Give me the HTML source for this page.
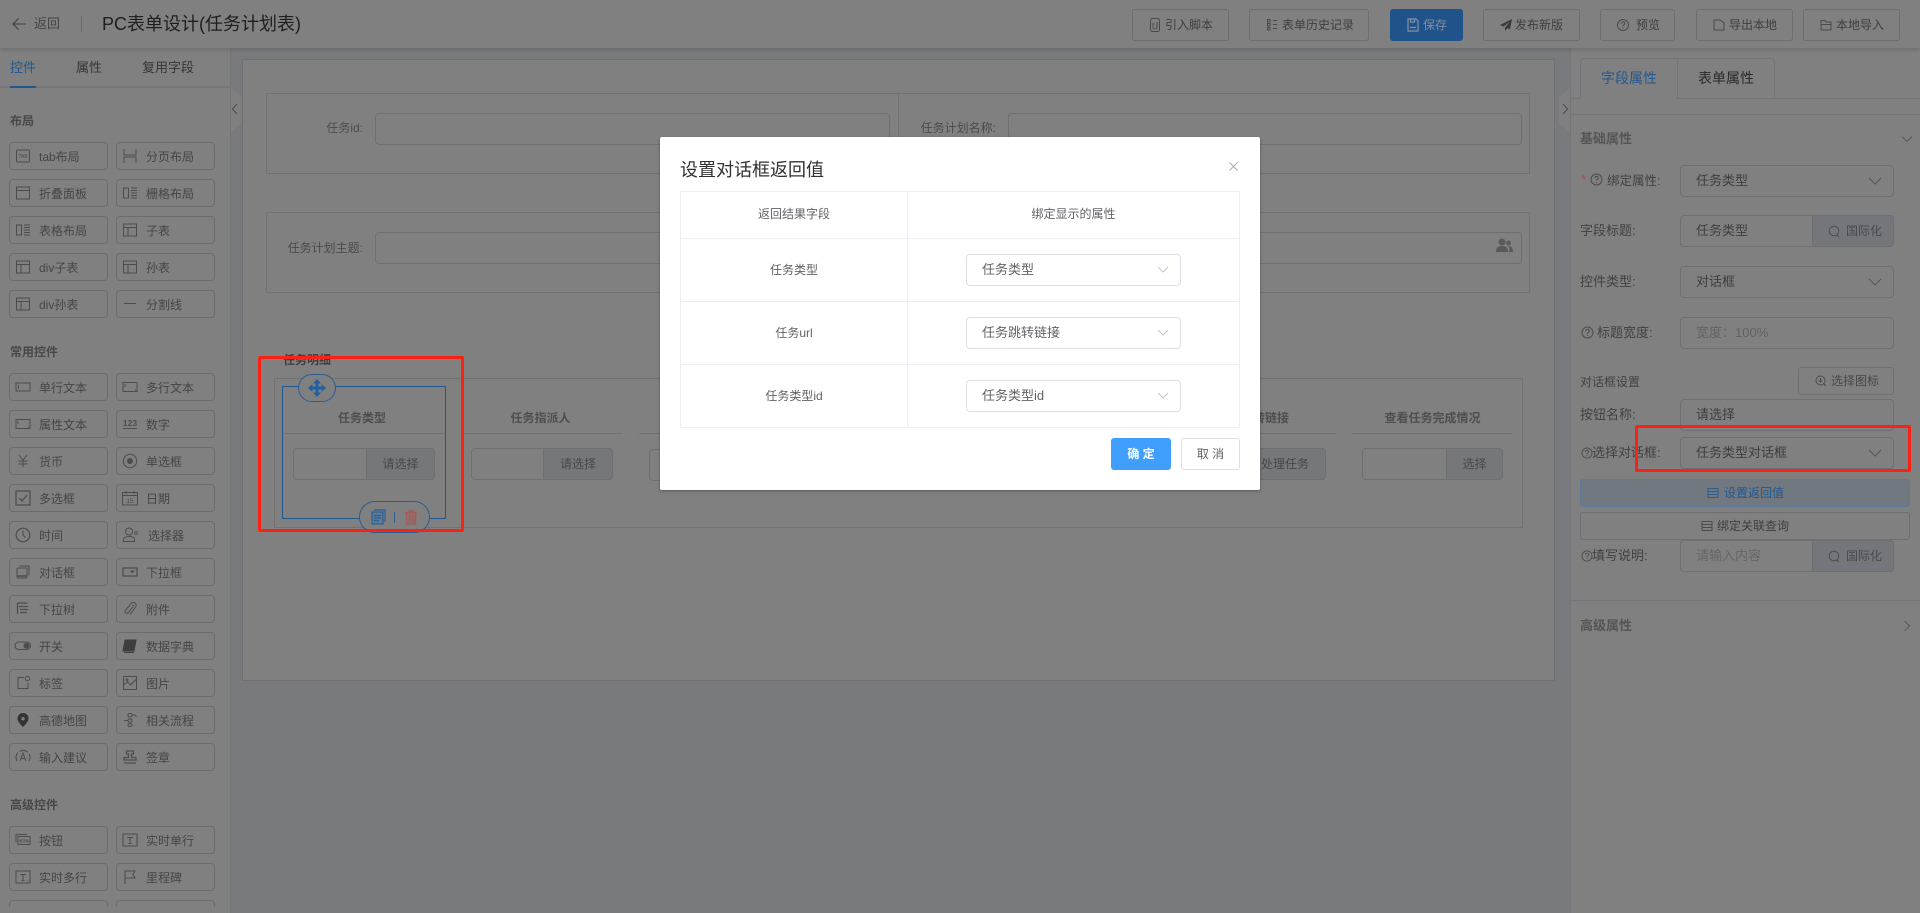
<!DOCTYPE html>
<html lang="zh"><head><meta charset="utf-8"><title>PC表单设计</title>
<style>
html,body{margin:0;padding:0;width:1920px;height:913px;overflow:hidden;background:#797a7d;font-family:"Liberation Sans","Noto Sans CJK SC",sans-serif;font-size:13px;color:#3a3a3a}
div,span,svg{box-sizing:border-box}
.p{position:absolute}
.t{position:absolute;white-space:nowrap;line-height:20px;height:20px}
.hb{position:absolute;top:9px;height:32px;border:1px solid #6e6e6e;border-radius:3px;line-height:30px;font-size:12px;color:#3e3e3e;white-space:nowrap}
.hb svg{position:absolute;top:7px}
.hb span{position:absolute;top:0}
.w{position:absolute;width:99px;height:28px;border:1px solid #6c6c6e;border-radius:4px;font-size:12px;line-height:26px;color:#454545;white-space:nowrap;background:#808080}
.w span{position:absolute;left:29px;top:1px}
.w svg{position:absolute;left:4px;top:4px;width:18px;height:18px;fill:none;stroke:#4c4c4c;stroke-width:1}
.r{left:116px}.r span{left:29px}
.l{left:9px}
.h{position:absolute;left:10px;font-size:12px;font-weight:bold;color:#484848;line-height:20px}
.box{position:absolute;border:1px solid #727272}
.in{position:absolute;border:1px solid #6f6f71;border-radius:4px;height:32px}
.rl{position:absolute;font-size:13px;color:#414141;line-height:20px;white-space:nowrap;left:1580px}
.ri{position:absolute;left:1680px;width:214px;height:32px;border:1px solid #6e6f72;border-radius:4px;font-size:13px;line-height:30px;padding-left:15px;color:#3e3e3e;white-space:nowrap}
.app{position:absolute;right:-1px;top:-1px;width:82px;height:32px;background:#74767b;border:1px solid #6e6f72;border-radius:0 4px 4px 0;font-size:12px;color:#484a4e;line-height:30px;padding-left:33px}
.app svg{position:absolute;left:15px;top:8px}
.chev{position:absolute;right:11px;top:11px}
.ms{position:absolute;left:966px;width:215px;height:32px;border:1px solid #dcdfe6;border-radius:4px;font-size:13px;line-height:30px;padding-left:15px;color:#606266;background:#fff}
.mc{position:absolute;font-size:12px;color:#606266;line-height:20px;text-align:center;white-space:nowrap}
.ml{position:absolute;background:#ebeef5}
.col{position:absolute;top:408px;font-size:12px;font-weight:bold;color:#4e4e4e;text-align:center;line-height:20px;white-space:nowrap}
.cl{position:absolute;top:433px;height:1px;background:#727272}
.gi{position:absolute;top:448px;height:32px;border:1px solid #6f6f71;border-radius:4px}
.ga{position:absolute;top:-1px;right:-1px;height:32px;background:#76777b;border:1px solid #6f6f71;border-radius:0 4px 4px 0;font-size:12px;color:#474747;line-height:30px;text-align:center;white-space:nowrap}
</style></head><body>

<!-- header -->
<div class="p" style="left:0;top:0;width:1920px;height:48px;background:#808080;box-shadow:0 2px 4px rgba(0,0,0,.14);z-index:3">
<svg class="p" style="left:11px;top:16px" width="16" height="16" viewBox="0 0 16 16" fill="none" stroke="#3e3e3e" stroke-width="1.1"><path d="M2 8H15M7.500 2.500L2 8l5.500 5.500"/></svg>
<div class="t" style="left:34px;top:14px;font-size:13px;color:#454545">返回</div>
<div class="p" style="left:81px;top:16px;width:1px;height:16px;background:#6b6b6b"></div>
<div class="t" style="left:102px;top:14px;font-size:18px;color:#1e1e1e">PC表单设计(任务计划表)</div>

<div class="hb" style="left:1132px;width:97px"><svg style="left:15px" width="14" height="16" viewBox="0 0 14 16" fill="none" stroke="#4a4a4a"><rect x="2.500" y="1.500" width="9" height="13" rx="2"/><path d="M5 6v4a2 2 0 0 0 4 0V5"/></svg><span style="left:32px">引入脚本</span></div>
<div class="hb" style="left:1249px;width:120px"><svg style="left:15px" width="14" height="16" viewBox="0 0 14 16" fill="none" stroke="#4a4a4a"><path d="M2.500 2.500h2.500v2.500H2.500zM2.500 6.500h2.500v2.500H2.500zM2.500 10.500h2.500v2.500H2.500zM8 3.500h4M8 7.500h4M8 11.500h4"/></svg><span style="left:32px">表单历史记录</span></div>
<div class="hb" style="left:1390px;width:73px;background:#20538a;border-color:#20538a;color:#80909f"><svg style="left:15px" width="14" height="16" viewBox="0 0 14 16" fill="none" stroke="#8292a5" stroke-width="1.200"><path d="M2 2h8l2 2v10H2zM4.500 2v3h4V2M4 10.500h6"/></svg><span style="left:32px">保存</span></div>
<div class="hb" style="left:1483px;width:97px"><svg style="left:15px" width="14" height="16" viewBox="0 0 14 16" fill="#3a3a3a"><path d="M13 2L1 8l3.500 1.500L11 4.500 6 10.500V14l2.500-2.800 2.500 1z"/></svg><span style="left:31px">发布新版</span></div>
<div class="hb" style="left:1600px;width:75px"><svg style="left:15px" width="14" height="16" viewBox="0 0 14 16" fill="none" stroke="#4a4a4a"><circle cx="7" cy="8" r="5.500"/><path d="M5.300 6.500a1.700 1.700 0 1 1 2.500 1.500c-.6.400-.8.600-.8 1.400M7 10.500v1"/></svg><span style="left:35px">预览</span></div>
<div class="hb" style="left:1696px;width:97px"><svg style="left:15px" width="14" height="16" viewBox="0 0 14 16" fill="none" stroke="#4a4a4a"><path d="M2 3h6l4 3v7H2z"/></svg><span style="left:32px">导出本地</span></div>
<div class="hb" style="left:1803px;width:97px"><svg style="left:15px" width="14" height="16" viewBox="0 0 14 16" fill="none" stroke="#4a4a4a"><path d="M2 3.500h4l1 1.500h5v8H2zM2 7.500h10"/></svg><span style="left:32px">本地导入</span></div>
</div>

<!-- left panel -->
<div class="p" style="left:0;top:0;width:231px;height:913px;background:#808080;border-right:1px solid #757578;overflow:hidden">
<div class="t" style="left:10px;top:58px;color:#23568f">控件</div>
<div class="t" style="left:76px;top:58px;color:#353535">属性</div>
<div class="t" style="left:142px;top:58px;color:#353535">复用字段</div>
<div class="p" style="left:0;top:86px;width:230px;height:2px;background:#76777c"></div>
<div class="p" style="left:10px;top:86px;width:26px;height:2px;background:#23568f"></div>

<div class="h" style="top:111px">布局</div>
<div class="w l" style="top:142px"><svg viewBox="0 0 18 18"><rect x="2.500" y="3" width="13" height="12" rx="1.500"/><text x="9" y="11" font-size="5" text-anchor="middle" fill="#4c4c4c" stroke="none">TAB</text></svg><span>tab布局</span></div>
<div class="w r" style="top:142px"><svg viewBox="0 0 18 18"><path d="M3 2v6h12V2M3 16v-6h12v6"/></svg><span>分页布局</span></div>
<div class="w l" style="top:179px"><svg viewBox="0 0 18 18"><rect x="2.500" y="3" width="13" height="12"/><path d="M2.500 6.500h13"/></svg><span>折叠面板</span></div>
<div class="w r" style="top:179px"><svg viewBox="0 0 18 18"><path d="M2.500 4h5v10h-5zM10 4h6M10 6.500h6M10 9h6M10 11.500h6M10 14h6"/></svg><span>栅格布局</span></div>
<div class="w l" style="top:216px"><svg viewBox="0 0 18 18"><path d="M2.500 4h5v10h-5zM10 4h6M10 6.500h6M10 9h6M10 11.500h6M10 14h6"/></svg><span>表格布局</span></div>
<div class="w r" style="top:216px"><svg viewBox="0 0 18 18"><rect x="2.500" y="3" width="13" height="12"/><path d="M2.500 6.500h13M7 6.500V15"/></svg><span>子表</span></div>
<div class="w l" style="top:253px"><svg viewBox="0 0 18 18"><rect x="2.500" y="3" width="13" height="12"/><path d="M2.500 6.500h13M7 6.500V15"/></svg><span>div子表</span></div>
<div class="w r" style="top:253px"><svg viewBox="0 0 18 18"><rect x="2.500" y="3" width="13" height="12"/><path d="M2.500 6.500h13M7 6.500V15"/></svg><span>孙表</span></div>
<div class="w l" style="top:290px"><svg viewBox="0 0 18 18"><rect x="2.500" y="3" width="13" height="12"/><path d="M2.500 6.500h13M7 6.500V15"/></svg><span>div孙表</span></div>
<div class="w r" style="top:290px"><svg viewBox="0 0 18 18"><path d="M3 8.500h12"/></svg><span>分割线</span></div>

<div class="h" style="top:342px">常用控件</div>
<div class="w l" style="top:373px"><svg viewBox="0 0 18 18"><rect x="2" y="5" width="14" height="8"/><path d="M4.500 7v4"/></svg><span>单行文本</span></div>
<div class="w r" style="top:373px"><svg viewBox="0 0 18 18"><rect x="2" y="4.500" width="14" height="9"/><path d="M14 12h1M4 6v3"/></svg><span>多行文本</span></div>
<div class="w l" style="top:410px"><svg viewBox="0 0 18 18"><rect x="2" y="4.500" width="14" height="9"/><path d="M14 12h1M4 6v3"/></svg><span>属性文本</span></div>
<div class="w r" style="top:410px"><svg viewBox="0 0 18 18"><text x="9" y="11" font-size="8.500" font-weight="bold" text-anchor="middle" fill="#4c4c4c" stroke="none">123</text><path d="M2 13.500h14"/></svg><span>数字</span></div>
<div class="w l" style="top:447px"><svg viewBox="0 0 18 18"><path d="M5 3l4 5 4-5M4.500 9h9M4.500 12h9M9 8v7"/></svg><span>货币</span></div>
<div class="w r" style="top:447px"><svg viewBox="0 0 18 18"><circle cx="9" cy="9" r="6.700"/><circle cx="9" cy="9" r="2.500" fill="#4c4c4c"/></svg><span>单选框</span></div>
<div class="w l" style="top:484px"><svg viewBox="0 0 18 18"><rect x="2" y="2" width="14" height="14" stroke-width="1.200"/><path d="M5.500 9l2.500 3 5-6" stroke-width="1.300"/></svg><span>多选框</span></div>
<div class="w r" style="top:484px"><svg viewBox="0 0 18 18"><rect x="1.500" y="3.500" width="15" height="12.500"/><path d="M1.500 6.500h15M5 2v3M13 2v3"/><text x="9" y="14" font-size="6.500" text-anchor="middle" fill="#4c4c4c" stroke="none">15</text></svg><span>日期</span></div>
<div class="w l" style="top:521px"><svg viewBox="0 0 18 18"><circle cx="9" cy="9" r="6.800" stroke-width="1.200"/><path d="M9 4.500V9l2.500 2.500"/></svg><span>时间</span></div>
<div class="w r" style="top:521px"><svg viewBox="0 0 18 18"><circle cx="8" cy="5.500" r="3.500"/><path d="M2 15.500c0-3.500 2-5 6-5s5 1 5.500 2V15.500zM13 6h4M13 8h4"/></svg><span style="left:31px">选择器</span></div>
<div class="w l" style="top:558px"><svg viewBox="0 0 18 18"><rect x="3" y="5" width="10" height="10" rx="1"/><path d="M5.500 3H15v9.500"/><path d="M3 13h10" stroke-width="1.500"/></svg><span>对话框</span></div>
<div class="w r" style="top:558px"><svg viewBox="0 0 18 18"><rect x="2" y="5" width="14" height="8" stroke-width="1.200"/><path d="M10 8h3l-1.500 1.500z" fill="#4c4c4c"/></svg><span>下拉框</span></div>
<div class="w l" style="top:595px"><svg viewBox="0 0 18 18"><path d="M3.500 3h10M3.500 3v11M5 6.500h9M6 9.500h8M6 12.500h7" stroke-width="1.200"/></svg><span>下拉树</span></div>
<div class="w r" style="top:595px"><svg viewBox="0 0 18 18"><path d="M13 5l-6 8a2 2 0 0 1-3-2l6.500-8a3 3 0 0 1 4.500 3.500l-6 8"/></svg><span>附件</span></div>
<div class="w l" style="top:632px"><svg viewBox="0 0 18 18"><rect x="1" y="5" width="15.500" height="7.500" rx="3.750"/><circle cx="12.500" cy="8.750" r="2.500" fill="#4c4c4c"/></svg><span>开关</span></div>
<div class="w r" style="top:632px"><svg viewBox="0 0 18 18" style="stroke:#3e3e3e"><path d="M4 3h11l-2 11H2z" fill="#3e3e3e"/><path d="M3 15.500h10"/></svg><span>数据字典</span></div>
<div class="w l" style="top:669px"><svg viewBox="0 0 18 18"><path d="M10 3.500H4v11h10V9"/><circle cx="13.500" cy="4.500" r="2.200"/></svg><span>标签</span></div>
<div class="w r" style="top:669px"><svg viewBox="0 0 18 18"><rect x="2.500" y="2.500" width="13" height="13"/><path d="M2.500 11l4-3 3 3 6-6"/><circle cx="6" cy="6" r="1"/></svg><span>图片</span></div>
<div class="w l" style="top:706px"><svg viewBox="0 0 18 18"><path d="M9 2a5.500 5.500 0 0 0-5.500 5.500C3.500 11 9 16 9 16s5.500-5 5.500-8.500A5.500 5.500 0 0 0 9 2zm0 4a1.700 1.700 0 1 1 0 3.400A1.700 1.700 0 0 1 9 6z" fill="#333" stroke="none"/></svg><span>高德地图</span></div>
<div class="w r" style="top:706px"><svg viewBox="0 0 18 18"><rect x="7" y="2.500" width="4" height="3.500" rx="1.500"/><rect x="7" y="8" width="4" height="3" rx="1.500"/><rect x="7" y="12.500" width="4" height="3" rx="1.500"/><path d="M7 9.500H3M11 4h3l1.500 2"/></svg><span>相关流程</span></div>
<div class="w l" style="top:743px"><svg viewBox="0 0 18 18"><path d="M3 13a7 7 0 1 1 12 0" stroke-dasharray="9 2"/><path d="M6 13l3-8 3 8M7 10.500h4"/></svg><span>输入建议</span></div>
<div class="w r" style="top:743px"><svg viewBox="0 0 18 18" stroke-width="1.200"><path d="M5.500 3h7v3H10.500v3.500H15V12H3V9.500h4.500V6H5.500zM3 15h12" stroke-width="1.200"/></svg><span>签章</span></div>

<div class="h" style="top:795px">高级控件</div>
<div class="w l" style="top:826px"><svg viewBox="0 0 18 18"><rect x="4" y="5.500" width="12" height="8"/><path d="M2 11.500V3.500h11"/><text x="10" y="11.500" font-size="4.500" font-weight="bold" text-anchor="middle" fill="#4c4c4c" stroke="none">BTN</text></svg><span>按钮</span></div>
<div class="w r" style="top:826px"><svg viewBox="0 0 18 18"><rect x="2" y="3" width="14" height="12"/><path d="M6 6.500h6M9 6.500v6M7.500 12.500h3"/></svg><span>实时单行</span></div>
<div class="w l" style="top:863px"><svg viewBox="0 0 18 18"><rect x="2" y="3" width="14" height="12"/><path d="M6 6.500h6M9 6.500v6M7.500 12.500h3M13.500 13h1" /></svg><span>实时多行</span></div>
<div class="w r" style="top:863px"><svg viewBox="0 0 18 18"><path d="M4 16V3h10l-2 3.500 2 3.500H4"/></svg><span>里程碑</span></div>
<div class="p" style="left:0;top:907px;width:230px;height:6px;background:#808080;z-index:2"></div>
<div class="w l" style="top:900px"></div>
<div class="w r" style="top:900px"></div>
</div>
<div class="p" style="left:231px;top:88px;width:10px;height:44px;background:#808080;clip-path:polygon(0 0,100% 20%,100% 80%,0 100%)"></div>
<svg class="p" style="left:231px;top:103px" width="8" height="12" viewBox="0 0 8 12" fill="none" stroke="#4c4c4c"><path d="M6 1L1.500 6 6 11"/></svg>

<!-- canvas -->
<div class="p" style="left:242px;top:59px;width:1313px;height:622px;background:#808080;border:1px solid #707072"></div>
<div class="box" style="left:266px;top:93px;width:1264px;height:81px"></div>
<div class="p" style="left:898px;top:93px;width:1px;height:81px;background:#727272"></div>
<div class="in" style="left:375px;top:113px;width:515px"></div>
<div class="t" style="left:300px;width:63px;top:118px;text-align:right;color:#4b4b4b;font-size:12px">任务id:</div>
<div class="t" style="left:900px;top:118px;color:#4b4b4b;font-size:12px;width:96px;text-align:right">任务计划名称:</div>
<div class="in" style="left:1008px;top:113px;width:514px"></div>
<div class="box" style="left:266px;top:212px;width:1264px;height:81px"></div>
<div class="in" style="left:375px;top:232px;width:1147px"></div>
<div class="t" style="left:260px;width:103px;top:238px;text-align:right;color:#4b4b4b;font-size:12px">任务计划主题:</div>
<svg class="p" style="left:1496px;top:238px" width="17" height="14" viewBox="0 0 17 14" fill="#5a5a5a"><circle cx="6" cy="4" r="3.500"/><path d="M0 14c0-5 2.500-6 6-6s6 1 6 6z"/><circle cx="12.500" cy="5" r="2.500"/><path d="M13 14h4c0-4-1.500-6-4.500-6 1 1.500 1 3.500.5 6z"/></svg>

<div class="t" style="left:283px;top:350px;font-size:12px;font-weight:bold;color:#3f3f3f">任务明细</div>
<div class="box" style="left:274px;top:378px;width:1249px;height:150px"></div>
<div class="col" style="left:280px;width:164px">任务类型</div>
<div class="cl" style="left:283px;width:163px"></div>
<div class="gi" style="left:293px;width:142px"><div class="ga" style="width:69px">请选择</div></div>
<div class="col" style="left:461px;width:159px">任务指派人</div>
<div class="cl" style="left:463px;width:159px"></div>
<div class="gi" style="left:471px;width:142px"><div class="ga" style="width:70px">请选择</div></div>
<div class="cl" style="left:639px;width:50px"></div>
<div class="gi" style="left:649px;width:100px;top:449px"></div>
<div class="col" style="left:1200px;width:89px;text-align:right">跳转链接</div>
<div class="cl" style="left:1200px;width:136px"></div>
<div class="gi" style="left:1200px;width:126px"><div class="ga" style="width:100px;text-align:right;padding-right:16px">处理任务</div></div>
<div class="col" style="left:1352px;width:161px">查看任务完成情况</div>
<div class="cl" style="left:1352px;width:161px"></div>
<div class="gi" style="left:1362px;width:141px"><div class="ga" style="width:57px">选择</div></div>

<!-- selected column -->
<div class="p" style="left:282px;top:386px;width:164px;height:133px;border:1px solid #23588f"></div>
<div class="p" style="left:298px;top:374px;width:38px;height:28px;border:1px solid #2a5d92;border-radius:14px;background:#808080"></div>
<svg class="p" style="left:308px;top:379px" width="18" height="18" viewBox="0 0 18 18" fill="#23609f"><path d="M9 0L13 4.500H10.500V7.500H13.500V5L18 9 13.500 13V10.500H10.500V13.500H13L9 18 5 13.500H7.500V10.500H4.500V13L0 9 4.500 5V7.500H7.500V4.500H5z"/></svg>
<div class="p" style="left:359px;top:501px;width:71px;height:32px;border:1px solid #2a5d92;border-radius:16px;background:#808080"></div>
<svg class="p" style="left:371px;top:509px" width="15" height="16" viewBox="0 0 15 16" fill="none" stroke="#23609f" stroke-width="1.200"><rect x="1" y="3" width="11" height="12" fill="#23609f" fill-opacity=".25"/><path d="M3 1h11v12M3 6.500h7M3 9h7M3 11.500h5"/></svg>
<div class="p" style="left:394px;top:512px;width:1px;height:11px;background:#2a5d92"></div>
<svg class="p" style="left:404px;top:509px" width="14" height="16" viewBox="0 0 14 16" fill="#a35c5c" fill-opacity=".45" stroke="#a35c5c" stroke-width="1.500"><path d="M1 3.500h12M5 3.500V1.500h4v2M2.500 3.500V15h9V3.500z"/><path d="M5.500 6v6.500M8.500 6v6.500"/></svg>

<!-- right panel -->
<div class="p" style="left:1570px;top:48px;width:350px;height:865px;background:#808080;border-left:1px solid #757578"></div>
<div class="p" style="left:1559px;top:88px;width:11px;height:44px;background:#808080;clip-path:polygon(0 20%,100% 0,100% 100%,0 80%)"></div>
<svg class="p" style="left:1561px;top:103px" width="8" height="12" viewBox="0 0 8 12" fill="none" stroke="#4c4c4c"><path d="M2 1l4.500 5L2 11"/></svg>
<div class="p" style="left:1570px;top:98px;width:350px;height:1px;background:#737478"></div>
<div class="p" style="left:1580px;top:58px;width:195px;height:41px;border:1px solid #737478;border-bottom:none;border-radius:4px 4px 0 0"></div>
<div class="p" style="left:1581px;top:98px;width:96px;height:1px;background:#808080"></div>
<div class="p" style="left:1677px;top:58px;width:1px;height:41px;background:#737478"></div>
<div class="t" style="left:1601px;top:68px;font-size:14px;color:#24588f">字段属性</div>
<div class="t" style="left:1698px;top:68px;font-size:14px;color:#2a2a2a">表单属性</div>
<div class="p" style="left:1570px;top:114px;width:350px;height:1px;background:#747579"></div>
<div class="t" style="left:1580px;top:129px;font-size:13px;font-weight:bold;color:#555">基础属性</div>
<svg class="p" style="left:1901px;top:135px" width="12" height="8" viewBox="0 0 12 8" fill="none" stroke="#5a5a5a"><path d="M1 1.500L6 6.500 11 1.500"/></svg>

<div class="p" style="left:1581px;top:172px;color:#a05050;font-size:13px;line-height:16px">*</div>
<svg class="p" style="left:1590px;top:173px" width="13" height="13" viewBox="0 0 13 13" fill="none" stroke="#4c4c4c"><circle cx="6.500" cy="6.500" r="5.500"/><path d="M4.800 5a1.700 1.700 0 1 1 2.500 1.500c-.6.400-.8.600-.8 1.400M6.500 9v1"/></svg>
<div class="rl" style="left:1607px;top:171px;font-size:12.500px">绑定属性:</div>
<div class="ri" style="top:165px">任务类型<svg class="chev" width="14" height="9" viewBox="0 0 14 9" fill="none" stroke="#55575b"><path d="M1 1l6 6 6-6"/></svg></div>
<div class="rl" style="top:221px">字段标题:</div>
<div class="ri" style="top:215px">任务类型<div class="app"><svg width="13" height="14" viewBox="0 0 13 14" fill="none" stroke="#4c4e52"><circle cx="6" cy="7" r="4.800"/><path d="M9 11l2 2"/></svg>国际化</div></div>
<div class="rl" style="top:272px">控件类型:</div>
<div class="ri" style="top:266px">对话框<svg class="chev" width="14" height="9" viewBox="0 0 14 9" fill="none" stroke="#55575b"><path d="M1 1l6 6 6-6"/></svg></div>
<svg class="p" style="left:1581px;top:326px" width="13" height="13" viewBox="0 0 13 13" fill="none" stroke="#4c4c4c"><circle cx="6.500" cy="6.500" r="5.500"/><path d="M4.800 5a1.700 1.700 0 1 1 2.500 1.500c-.6.400-.8.600-.8 1.400M6.500 9v1"/></svg>
<div class="rl" style="left:1597px;top:323px">标题宽度:</div>
<div class="ri" style="top:317px;color:#626262">宽度：100%</div>

<div class="rl" style="top:372px;font-size:12px">对话框设置</div>
<div class="p" style="left:1798px;top:367px;width:96px;height:28px;border:1px solid #6e6f72;border-radius:3px;font-size:12px;line-height:26px;padding-left:32px;color:#474747;white-space:nowrap">选择图标<svg class="p" style="left:16px;top:7px" width="12" height="12" viewBox="0 0 12 12" fill="none" stroke="#4c4c4c"><circle cx="5.500" cy="5.500" r="4.500"/><path d="M9 9l2 2M5.500 3v4M4 5.500l1.500 1.500L7 5.500"/></svg></div>
<div class="rl" style="top:405px">按钮名称:</div>
<div class="ri" style="top:399px">请选择</div>
<svg class="p" style="left:1581px;top:447px" width="12" height="12" viewBox="0 0 13 13" fill="none" stroke="#4c4c4c"><circle cx="6.500" cy="6.500" r="5.500"/><path d="M4.800 5a1.700 1.700 0 1 1 2.500 1.500c-.6.400-.8.600-.8 1.400M6.500 9v1"/></svg>
<div class="rl" style="left:1592px;top:443px">选择对话框:</div>
<div class="ri" style="top:437px">任务类型对话框<svg class="chev" width="14" height="9" viewBox="0 0 14 9" fill="none" stroke="#55575b"><path d="M1 1l6 6 6-6"/></svg></div>
<div class="p" style="left:1580px;top:479px;width:330px;height:28px;background:#717880;border:1px solid #5c7b9c;border-radius:3px"></div>
<svg class="p" style="left:1707px;top:487px" width="12" height="12" viewBox="0 0 12 12" fill="none" stroke="#2d5c8d"><path d="M1 1.500h10v9H1zM1 4.500h10M1 7.500h10"/></svg>
<div class="t" style="left:1724px;top:483px;font-size:12px;color:#24588f">设置返回值</div>
<div class="p" style="left:1580px;top:512px;width:330px;height:28px;border:1px solid #6e6f72;border-radius:3px"></div>
<svg class="p" style="left:1701px;top:520px" width="12" height="12" viewBox="0 0 12 12" fill="none" stroke="#4c4c4c"><path d="M1 1.500h10v9H1zM1 4.500h10M1 7.500h10"/></svg>
<div class="t" style="left:1717px;top:516px;font-size:12px;color:#3e3e3e">绑定关联查询</div>
<svg class="p" style="left:1581px;top:550px" width="12" height="12" viewBox="0 0 13 13" fill="none" stroke="#4c4c4c"><circle cx="6.500" cy="6.500" r="5.500"/><path d="M4.800 5a1.700 1.700 0 1 1 2.500 1.500c-.6.400-.8.600-.8 1.400M6.500 9v1"/></svg>
<div class="rl" style="left:1592px;top:546px">填写说明:</div>
<div class="ri" style="top:540px;color:#666">请输入内容<div class="app"><svg width="13" height="14" viewBox="0 0 13 14" fill="none" stroke="#4c4e52"><circle cx="6" cy="7" r="4.800"/><path d="M9 11l2 2"/></svg>国际化</div></div>
<div class="p" style="left:1570px;top:600px;width:350px;height:1px;background:#747579"></div>
<div class="t" style="left:1580px;top:616px;font-size:13px;font-weight:bold;color:#555">高级属性</div>
<svg class="p" style="left:1903px;top:620px" width="8" height="12" viewBox="0 0 8 12" fill="none" stroke="#5a5a5a"><path d="M1.500 1l5 5-5 5"/></svg>

<!-- red annotation boxes -->
<div class="p" style="left:258px;top:356px;width:206px;height:176px;border:3px solid #fb2213;border-radius:2px;z-index:8"></div>
<div class="p" style="left:1635px;top:425px;width:276px;height:47px;border:3px solid #fb2213;border-radius:2px;z-index:8"></div>

<!-- modal -->
<div class="p" style="left:660px;top:137px;width:600px;height:353px;background:#fff;border-radius:2px;box-shadow:0 1px 3px rgba(0,0,0,.3);z-index:9"></div>
<div class="p" style="left:0;top:0;z-index:10">
<div class="t" style="left:680px;top:160px;font-size:18px;color:#303133">设置对话框返回值</div>
<svg class="p" style="left:1229px;top:162px" width="9" height="9" viewBox="0 0 9 9" fill="none" stroke="#a8abb2"><path d="M.5.500l8 8M8.500.500l-8 8"/></svg>
<div class="p" style="left:680px;top:191px;width:560px;height:237px;border:1px solid #ebeef5"></div>
<div class="ml" style="left:907px;top:191px;width:1px;height:237px"></div>
<div class="ml" style="left:680px;top:238px;width:560px;height:1px"></div>
<div class="ml" style="left:680px;top:301px;width:560px;height:1px"></div>
<div class="ml" style="left:680px;top:364px;width:560px;height:1px"></div>
<div class="mc" style="left:681px;width:226px;top:204px">返回结果字段</div>
<div class="mc" style="left:908px;width:331px;top:204px">绑定显示的属性</div>
<div class="mc" style="left:681px;width:226px;top:260px">任务类型</div>
<div class="mc" style="left:681px;width:226px;top:323px">任务url</div>
<div class="mc" style="left:681px;width:226px;top:386px">任务类型id</div>
<div class="ms" style="top:254px">任务类型<svg class="chev" width="12" height="8" viewBox="0 0 12 8" fill="none" stroke="#c0c4cc"><path d="M1 1l5 5 5-5"/></svg></div>
<div class="ms" style="top:317px">任务跳转链接<svg class="chev" width="12" height="8" viewBox="0 0 12 8" fill="none" stroke="#c0c4cc"><path d="M1 1l5 5 5-5"/></svg></div>
<div class="ms" style="top:380px">任务类型id<svg class="chev" width="12" height="8" viewBox="0 0 12 8" fill="none" stroke="#c0c4cc"><path d="M1 1l5 5 5-5"/></svg></div>
<div class="p" style="left:1111px;top:438px;width:60px;height:32px;background:#409eff;border-radius:3px;color:#fff;font-size:12px;font-weight:bold;line-height:32px;text-align:center;white-space:nowrap">确 定</div>
<div class="p" style="left:1181px;top:438px;width:59px;height:32px;background:#fff;border:1px solid #dcdfe6;border-radius:3px;color:#606266;font-size:12px;line-height:30px;text-align:center;white-space:nowrap">取 消</div>
</div>
</body></html>
